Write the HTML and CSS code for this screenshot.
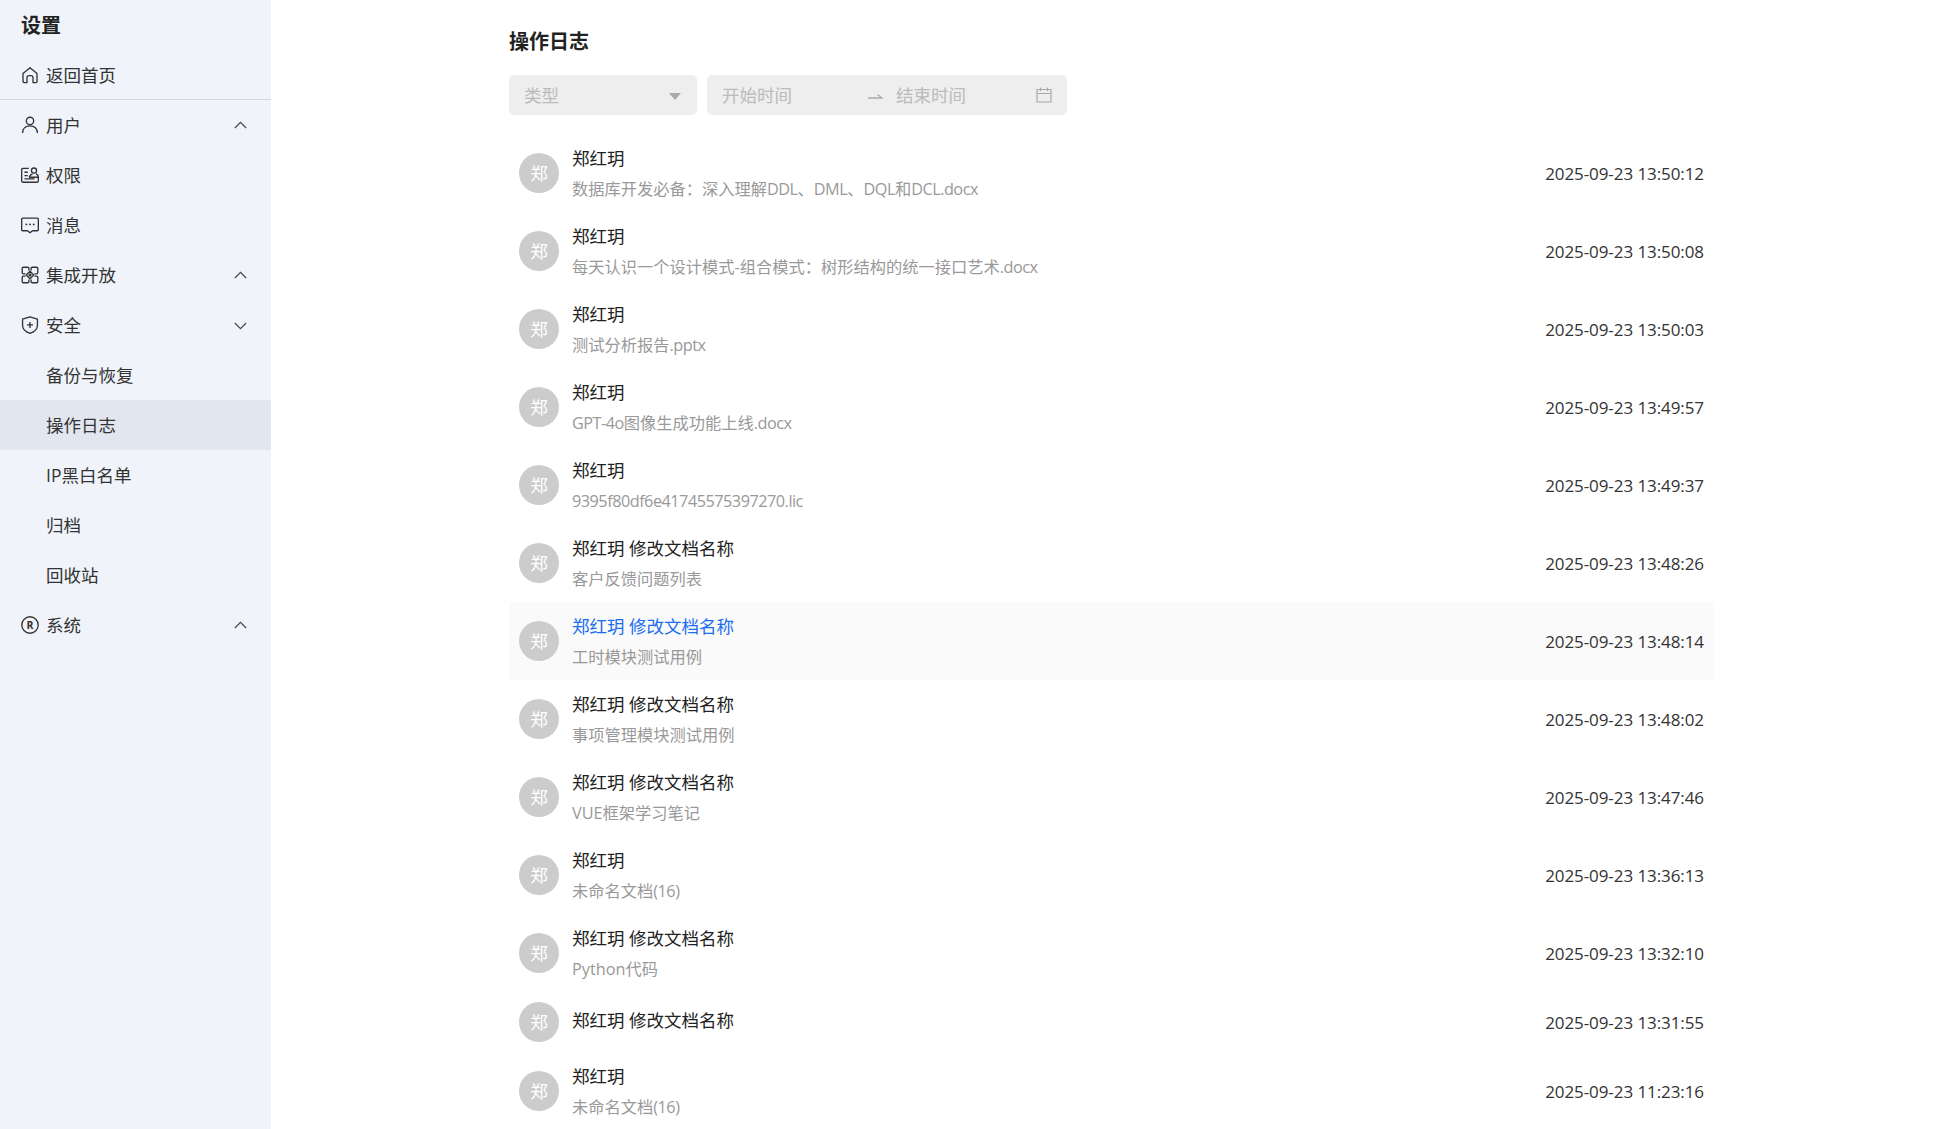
FILE: index.html
```html
<!DOCTYPE html>
<html lang="zh-CN">
<head>
  <meta charset="UTF-8" />
  <title>操作日志</title>
  <link rel="stylesheet" href="styles.css">
</head>
<body>
  <aside class="sidebar">
    <div class="sidebar-title">设置</div>
    <a class="menu-item back-item">
      <svg class="menu-icon" viewBox="0 0 18 18"><path d="M2.700 7.600 9 2.400l6.300 5.200v7.200q0 1-1 1h-2.600v-4.400q0-1.900-1.900-1.900H8.200q-1.900 0-1.900 1.900v4.400H3.700q-1 0-1-1z"/></svg>
      <span>返回首页</span>
    </a>
    <a class="menu-item">
      <svg class="menu-icon" viewBox="0 0 18 18"><circle cx="9" cy="5.300" r="3.300"/><path d="M2.300 16.300c0-4 2.800-6.500 6.700-6.500s6.700 2.500 6.700 6.500"/></svg>
      <span>用户</span>
      <svg class="chevron" viewBox="0 0 12 12"><path d="M1.500 8 6 3.500 10.500 8"/></svg>
    </a>
    <a class="menu-item">
      <svg class="menu-icon" viewBox="0 0 18 18"><path d="M8 3H2.500q-1 0-1 1v10.500q0 1 1 1h13q1 0 1-1V11H8.500q0-2 2.800-2.800M4 6.500h3M4 9.500h3M4 12.500h9"/><circle cx="12.600" cy="5" r="2.300"/><path d="M16.500 11q0-2.400-2.200-3"/></svg>
      <span>权限</span>
    </a>
    <a class="menu-item">
      <svg class="menu-icon" viewBox="0 0 18 18"><path d="M2.500 2.800h13q1 0 1 1v9.400q0 1-1 1h-4.300L9 16l-2.200-1.800H2.500q-1 0-1-1V3.800q0-1 1-1z"/><path class="dots" d="M5.700 8.500h.1M9 8.500h.1M12.300 8.500h.1"/></svg>
      <span>消息</span>
    </a>
    <a class="menu-item">
      <svg class="menu-icon" viewBox="0 0 18 18"><path d="M8 5V3q0-1-1-1H3q-1 0-1 1v4q0 1 1 1h2M10 5V3q0-1 1-1h4q1 0 1 1v4q0 1-1 1h-2M8 13v2q0 1-1 1H3q-1 0-1-1v-4q0-1 1-1h2M10 13v2q0 1 1 1h4q1 0 1-1v-4q0-1-1-1h-2"/><path d="M9 5.600 12.400 9 9 12.400 5.600 9z"/><path class="star" d="M9 7.300 10.700 9 9 10.700 7.300 9z"/></svg>
      <span>集成开放</span>
      <svg class="chevron" viewBox="0 0 12 12"><path d="M1.500 8 6 3.500 10.500 8"/></svg>
    </a>
    <a class="menu-item">
      <svg class="menu-icon" viewBox="0 0 18 18"><path d="M9 1.700 15.700 3.800v5.400c0 3.600-2.600 5.900-6.700 7.300-4.100-1.400-6.700-3.700-6.700-7.300V3.800z"/><path d="M9 6.200v5.400M6.300 8.900h5.400"/></svg>
      <span>安全</span>
      <svg class="chevron" viewBox="0 0 12 12"><path d="M1.500 4 6 8.500 10.500 4"/></svg>
    </a>
    <a class="menu-item sub-item">备份与恢复</a>
    <a class="menu-item sub-item active">操作日志</a>
    <a class="menu-item sub-item">IP黑白名单</a>
    <a class="menu-item sub-item">归档</a>
    <a class="menu-item sub-item">回收站</a>
    <a class="menu-item">
      <svg class="menu-icon" viewBox="0 0 18 18"><circle cx="9" cy="9" r="7.400"/><text class="reg-mark" x="9" y="12.500">R</text></svg>
      <span>系统</span>
      <svg class="chevron" viewBox="0 0 12 12"><path d="M1.500 8 6 3.500 10.500 8"/></svg>
    </a>
  </aside>

  <main class="content">
    <h1 class="page-title">操作日志</h1>

    <div class="filters">
      <div class="field type-field">
        <span>类型</span>
        <span class="caret"></span>
      </div>
      <div class="field date-field">
        <span class="date-text">开始时间</span>
        <svg class="range-arrow" viewBox="0 0 16 8"><path d="M1 6h14L10.500 2.500"/></svg>
        <span class="date-text">结束时间</span>
        <svg class="calendar" viewBox="0 0 18 18"><path d="M2 3.500h14v12.500H2zM2 7.500h14M5.500 1.500v3.500M12.500 1.500v3.500"/></svg>
      </div>
    </div>

    <ul class="log-list">
      <li class="log-row">
        <div class="avatar">郑</div>
        <div class="log-text"><div class="log-name">郑红玥</div><div class="log-file">数据库开发必备：深入理解<span class="latin">DDL</span>、<span class="latin">DML</span>、<span class="latin">DQL</span>和<span class="latin">DCL.docx</span></div></div>
        <div class="log-time">2025-09-23 13:50:12</div>
      </li>
      <li class="log-row">
        <div class="avatar">郑</div>
        <div class="log-text"><div class="log-name">郑红玥</div><div class="log-file">每天认识一个设计模式-组合模式：树形结构的统一接口艺术<span class="latin">.docx</span></div></div>
        <div class="log-time">2025-09-23 13:50:08</div>
      </li>
      <li class="log-row">
        <div class="avatar">郑</div>
        <div class="log-text"><div class="log-name">郑红玥</div><div class="log-file">测试分析报告<span class="latin">.pptx</span></div></div>
        <div class="log-time">2025-09-23 13:50:03</div>
      </li>
      <li class="log-row">
        <div class="avatar">郑</div>
        <div class="log-text"><div class="log-name">郑红玥</div><div class="log-file"><span class="latin">GPT-4o</span>图像生成功能上线<span class="latin">.docx</span></div></div>
        <div class="log-time">2025-09-23 13:49:57</div>
      </li>
      <li class="log-row">
        <div class="avatar">郑</div>
        <div class="log-text"><div class="log-name">郑红玥</div><div class="log-file"><span class="latin">9395f80df6e41745575397270.lic</span></div></div>
        <div class="log-time">2025-09-23 13:49:37</div>
      </li>
      <li class="log-row">
        <div class="avatar">郑</div>
        <div class="log-text"><div class="log-name">郑红玥 修改文档名称</div><div class="log-file">客户反馈问题列表</div></div>
        <div class="log-time">2025-09-23 13:48:26</div>
      </li>
      <li class="log-row hovered">
        <div class="avatar">郑</div>
        <div class="log-text"><div class="log-name">郑红玥 修改文档名称</div><div class="log-file">工时模块测试用例</div></div>
        <div class="log-time">2025-09-23 13:48:14</div>
      </li>
      <li class="log-row">
        <div class="avatar">郑</div>
        <div class="log-text"><div class="log-name">郑红玥 修改文档名称</div><div class="log-file">事项管理模块测试用例</div></div>
        <div class="log-time">2025-09-23 13:48:02</div>
      </li>
      <li class="log-row">
        <div class="avatar">郑</div>
        <div class="log-text"><div class="log-name">郑红玥 修改文档名称</div><div class="log-file">VUE框架学习笔记</div></div>
        <div class="log-time">2025-09-23 13:47:46</div>
      </li>
      <li class="log-row">
        <div class="avatar">郑</div>
        <div class="log-text"><div class="log-name">郑红玥</div><div class="log-file">未命名文档<span class="latin">(16)</span></div></div>
        <div class="log-time">2025-09-23 13:36:13</div>
      </li>
      <li class="log-row">
        <div class="avatar">郑</div>
        <div class="log-text"><div class="log-name">郑红玥 修改文档名称</div><div class="log-file">Python代码</div></div>
        <div class="log-time">2025-09-23 13:32:10</div>
      </li>
      <li class="log-row">
        <div class="avatar">郑</div>
        <div class="log-text single"><div class="log-name">郑红玥 修改文档名称</div></div>
        <div class="log-time">2025-09-23 13:31:55</div>
      </li>
      <li class="log-row">
        <div class="avatar">郑</div>
        <div class="log-text"><div class="log-name">郑红玥</div><div class="log-file">未命名文档<span class="latin">(16)</span></div></div>
        <div class="log-time">2025-09-23 11:23:16</div>
      </li>
    </ul>
  </main>
</body>
</html>
```

FILE: styles.css
```css
* {
  box-sizing: border-box;
}

html, body {
  height: 100%;
}

body {
  margin: 0;
  display: flex;
  overflow: hidden;
  background: #fff;
  color: #333;
  font-family: "Open Sans", "Noto Sans CJK SC", sans-serif;
  font-size: 17.5px;
}

.sidebar {
  flex: 0 0 271px;
  height: 100%;
  background: #f0f3fa;
}

.sidebar-title {
  height: 50px;
  padding-left: 21px;
  font-size: 20px;
  font-weight: 700;
  line-height: 51px;
  color: #222;
}

.menu-item {
  display: flex;
  align-items: center;
  height: 50px;
  padding: 0 23.500px 2px 20px;
  color: #333;
}

.back-item {
  padding-bottom: 0;
  border-bottom: 1px solid #d8d9de;
}

.sub-item {
  padding-left: 46px;
}

.active {
  background: #e2e6ef;
}

.menu-icon {
  flex: none;
  width: 20px;
  height: 20px;
  margin: 2px 6px 0 0;
  fill: none;
  stroke: #333;
  stroke-width: 1.200;
  stroke-linejoin: round;
}

.back-item .menu-icon {
  margin-top: 0;
}

.menu-icon .dots {
  stroke-width: 1.600;
  stroke-linecap: round;
}

.menu-icon .star {
  fill: #333;
  stroke: none;
}

.reg-mark {
  fill: #333;
  stroke: none;
  font-size: 9.500px;
  font-weight: 700;
  text-anchor: middle;
}

.chevron {
  flex: none;
  width: 15px;
  height: 15px;
  margin: 2px 0 0 auto;
  fill: none;
  stroke: #444;
  stroke-width: 0.900;
}

.content {
  flex: 1;
  min-width: 0;
  padding: 27px 237px 0 238px;
}

.page-title {
  margin: 0 0 18px;
  font-size: 20px;
  font-weight: 700;
  line-height: 30px;
  color: #222;
}

.filters {
  display: flex;
  gap: 10px;
  margin-bottom: 19px;
}

.field {
  display: flex;
  align-items: center;
  height: 40px;
  padding: 0 14px 2px 15px;
  background: #eee;
  border-radius: 5px;
  color: #bbb;
}

.type-field {
  justify-content: space-between;
  width: 188px;
  padding: 0 16px 2px 15px;
}

.caret {
  width: 0;
  height: 0;
  margin-top: 5px;
  border-left: 6px solid transparent;
  border-right: 6px solid transparent;
  border-top: 7px solid #aaa;
}

.date-field {
  width: 360px;
}

.date-text {
  width: 73px;
}

.range-arrow {
  width: 16px;
  height: 8px;
  margin: 4px 13px 0 72px;
  fill: none;
  stroke: #aaa;
  stroke-width: 1.300;
}

.calendar {
  width: 18px;
  height: 18px;
  margin: 2px 0 0 auto;
  fill: none;
  stroke: #aaa;
  stroke-width: 1.200;
}

.log-list {
  margin: 0;
  padding: 0;
  list-style: none;
}

.log-row {
  display: flex;
  align-items: center;
  padding: 10px;
}

.hovered {
  background: #fafafa;
}

.hovered .log-name {
  color: #1a6ef0;
}

.avatar {
  flex: none;
  width: 40px;
  height: 40px;
  margin-right: 13px;
  border-radius: 50%;
  background: #ccc;
  color: #fff;
  text-align: center;
  line-height: 40px;
}

.log-text {
  flex: 1;
  min-width: 0;
}

.log-text.single {
  padding-bottom: 4px;
}

.log-name {
  line-height: 28px;
  color: #222;
}

.log-file {
  margin-top: 5px;
  font-size: 16.250px;
  line-height: 25px;
  color: #999;
}

.latin {
  letter-spacing: -0.500px;
}

.log-time {
  flex: none;
  font-size: 17px;
  letter-spacing: -0.080px;
  color: #333;
}
```
